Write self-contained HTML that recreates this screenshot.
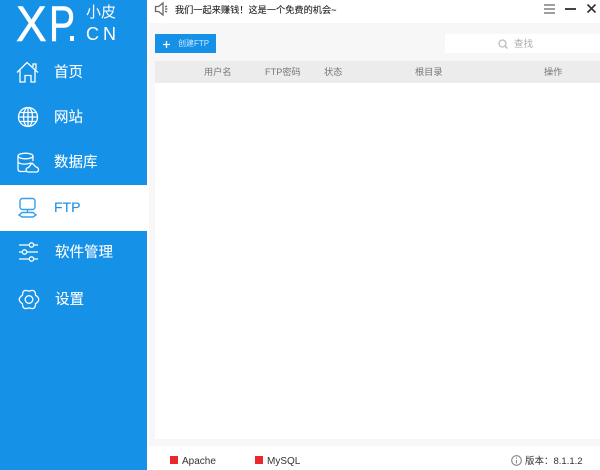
<!DOCTYPE html>
<html><head><meta charset="utf-8"><style>
html,body{margin:0;padding:0;width:600px;height:470px;overflow:hidden;background:#fff}
body{position:relative;font-family:"Liberation Sans","Noto Sans CJK SC",sans-serif}
div,span,svg{position:absolute}
.t{white-space:nowrap;line-height:1}
.n{color:#fff;font-size:14.5px;left:54px;-webkit-text-stroke:.1px #fff}
.h{color:#777;font-size:9.2px;top:68px}
svg{fill:none;stroke:#fff;stroke-width:1.3;overflow:visible}
</style></head><body>
<div style="left:0;top:0;width:147px;height:470px;background:#1591e8"></div>
<div style="left:149px;top:23px;width:451px;height:423px;background:#f7f7f7"></div>
<div style="left:155px;top:83px;width:445px;height:356px;background:#fff"></div>
<div style="left:155px;top:61px;width:445px;height:22px;background:#ececec"></div>
<div style="left:0;top:185px;width:147px;height:46px;background:#fff"></div>

<div class="t" style="left:16px;top:-1px;font-size:50px;color:#fff;-webkit-text-stroke:.6px #fff;transform:scaleX(.92);transform-origin:left">X</div>
<div class="t" style="left:49px;top:-1px;font-size:50px;color:#fff;-webkit-text-stroke:.6px #fff;transform:scaleX(.78);transform-origin:left">P</div>
<div style="left:70px;top:36px;width:4px;height:5px;background:#fff"></div>
<div class="t" style="left:86px;top:5px;font-size:15px;color:#fff">小皮</div>
<div class="t" style="left:86px;top:25px;font-size:18px;color:#fff;letter-spacing:4px">CN</div>

<svg style="left:16px;top:61px" width="24" height="24" viewBox="0 0 24 24"><path d="M1 11.500 L11 1.500 L22 11.500 M17 6 V3 H20 V8.500 M4 9 V21 H9 V14.500 H15 V21 H19 V9"/></svg>
<div class="t n" style="top:66px">首页</div>

<svg style="left:17px;top:106px" width="22" height="22" viewBox="0 0 22 22"><circle cx="11" cy="11" r="9.500"/><ellipse cx="11" cy="11" rx="4.500" ry="9.500"/><path d="M11 2V20M2 11H20M3 6.500H19M3 15.500H19"/></svg>
<div class="t n" style="top:111px">网站</div>

<svg style="left:17px;top:152px" width="24" height="22" viewBox="0 0 24 22"><ellipse cx="8.500" cy="4" rx="7.500" ry="2.800"/><path d="M1 4V17Q1 19.500 4 19.500H9M16 4V9M1 10.500Q6 13.500 14 11M11 20H19.500Q21.500 20 21.500 17.500Q21.500 15.500 19 15L15 11L11.500 15.500Q9 16 9 18Q9.500 20 11 20"/></svg>
<div class="t n" style="top:156px">数据库</div>

<svg style="left:18px;top:197px;stroke:#35a0ee;stroke-width:1.4" width="20" height="22" viewBox="0 0 20 22"><rect x="2" y="1.500" width="15" height="11" rx="2.500"/><path d="M9.500 12.500V15.500M4 15.500H15L18 18L15 20H4L1 18Z"/></svg>
<div class="t" style="left:54px;top:200px;font-size:14px;color:#1e90e6;-webkit-text-stroke:.1px #1e90e6">FTP</div>

<svg style="left:19px;top:243px" width="20" height="18" viewBox="0 0 20 18"><path d="M0 2H10.500M14.500 2H19M0 9H3.500M7.500 9H19M0 16H10.500M14.500 16H19"/><circle cx="12.500" cy="2" r="2.200"/><circle cx="5.500" cy="9" r="2.200"/><circle cx="12.500" cy="16" r="2.200"/></svg>
<div class="t n" style="left:55px;top:246px">软件管理</div>

<svg style="left:18px;top:289px" width="22" height="21" viewBox="0 0 22 21"><path d="M17.500 6.200Q24 10.500 17.500 14.800Q17.500 21.500 11 18.800Q4.500 21.500 4.500 14.800Q-2 10.500 4.500 6.200Q4.500 -.5 11 2.200Q17.500 -.5 17.500 6.200Z" stroke-linejoin="round"/><circle cx="11" cy="10.500" r="3.800"/></svg>
<div class="t n" style="left:55px;top:293px">设置</div>

<svg style="left:155px;top:2px;stroke:#666" width="13" height="14" viewBox="0 0 13 14"><path d="M0.500 4.500H3.500L8 1V13L3.500 9.500H0.500ZM10 5L12 4M10 7H12.500M10 9L12 10"/></svg>
<div class="t" style="left:175px;top:6px;font-size:9.200px;color:#222;-webkit-text-stroke:.1px #222">我们一起来赚钱！这是一个免费的机会~</div>

<svg style="left:544px;top:4px;stroke:#666" width="11" height="10" viewBox="0 0 11 10"><path d="M0 1H11M0 5H11M0 9H11"/></svg>
<div style="left:565px;top:8px;width:11px;height:2px;background:#444"></div>
<svg style="left:587px;top:4px;stroke:#333;stroke-width:1.600" width="10" height="10" viewBox="0 0 10 10"><path d="M.5 .5L8.500 8.500M8.500 .5L.5 8.500"/></svg>

<div style="left:155px;top:34px;width:61px;height:19px;background:#1591e8"></div>
<svg style="left:163px;top:41px" width="7" height="7" viewBox="0 0 7 7"><path d="M3.500 0V7M0 3.500H7"/></svg>
<div class="t" style="left:178px;top:40px;font-size:8px;color:#cfe6f9">创建FTP</div>

<div style="left:445px;top:34px;width:155px;height:19px;background:#fff"></div>
<svg style="left:498px;top:39px;stroke:#bbb" width="10" height="10" viewBox="0 0 10 10"><circle cx="4.500" cy="4.500" r="3.500"/><path d="M7 7L9.500 9.500"/></svg>
<div class="t" style="left:514px;top:40px;font-size:9.500px;color:#aaa">查找</div>

<div class="t h" style="left:204px">用户名</div>
<div class="t h" style="left:265px">FTP密码</div>
<div class="t h" style="left:324px">状态</div>
<div class="t h" style="left:415px">根目录</div>
<div class="t h" style="left:544px">操作</div>

<div style="left:170px;top:456px;width:8px;height:8px;background:#e8282c"></div>
<div class="t" style="left:182px;top:457px;font-size:10px;color:#333">Apache</div>
<div style="left:255px;top:456px;width:8px;height:8px;background:#e8282c"></div>
<div class="t" style="left:267px;top:457px;font-size:10px;color:#333">MySQL</div>

<svg style="left:511px;top:455px;stroke:#888;stroke-width:1.100" width="11" height="11" viewBox="0 0 11 11"><circle cx="5.500" cy="5.500" r="4.800"/><path d="M5.500 5V8.500M5.500 2.500V3.800"/></svg>
<div class="t" style="left:525px;top:457px;font-size:9.500px;color:#333">版本：8.1.1.2</div>
</body></html>
